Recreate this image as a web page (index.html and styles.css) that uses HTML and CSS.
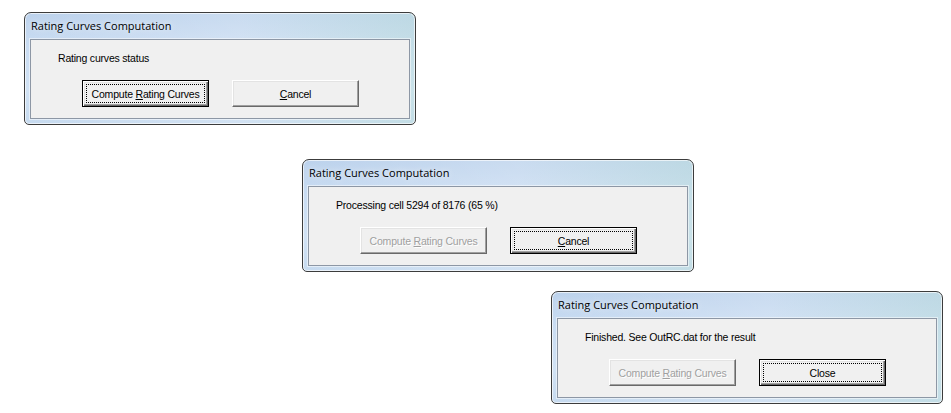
FILE: index.html
```html
<!DOCTYPE html>
<html>
<head>
<meta charset="utf-8">
<link rel="stylesheet" href="styles.css">
</head>
<body>
<div class="stack">
  <div class="window w1">
    <div class="titlebar">Rating Curves Computation</div>
    <div class="client">
      <div class="status">Rating curves status</div>
      <div class="buttons">
        <button class="btn default"><span class="focus"><span class="text">Compute <u>R</u>ating Curves</span></span></button>
        <button class="btn"><span class="label"><span class="text"><u>C</u>ancel</span></span></button>
      </div>
    </div>
  </div>

  <div class="window w2">
    <div class="titlebar">Rating Curves Computation</div>
    <div class="client">
      <div class="status">Processing cell 5294 of 8176 (65 %)</div>
      <div class="buttons">
        <button class="btn disabled"><span class="label"><span class="text">Compute <u>R</u>ating Curves</span></span></button>
        <button class="btn default"><span class="focus"><span class="text"><u>C</u>ancel</span></span></button>
      </div>
    </div>
  </div>

  <div class="window w3">
    <div class="titlebar">Rating Curves Computation</div>
    <div class="client">
      <div class="status">Finished. See OutRC.dat for the result</div>
      <div class="buttons">
        <button class="btn disabled"><span class="label"><span class="text">Compute <u>R</u>ating Curves</span></span></button>
        <button class="btn default"><span class="focus"><span class="text">Close</span></span></button>
      </div>
    </div>
  </div>
</div>
</body>
</html>
```

FILE: styles.css
```css
* { box-sizing: border-box; }

html, body {
  margin: 0;
  padding: 0;
  background: #ffffff;
  width: 951px;
  height: 413px;
  overflow: hidden;
}

.stack {
  display: flex;
  flex-direction: column;
  align-items: flex-start;
  padding-top: 12px;
}

.window {
  width: 392px;
  height: 113px;
  border: 1px solid #3c3c3c;
  border-radius: 7px 7px 5px 5px;
  background:
    linear-gradient(90deg, rgba(255,255,255,0) 0%, rgba(255,255,255,0.2) 55%, rgba(190,225,215,0.4) 100%),
    linear-gradient(180deg, #bcd2ec 0%, #c9dcf2 30%, #d1e2f4 70%, #c6daef 100%);
  box-shadow: inset 0 0 0 1px rgba(255,255,255,0.65);
  padding: 0 5px 5px 5px;
  display: flex;
  flex-direction: column;
}

.w1 { margin-left: 24px; }
.w2 { margin-left: 302px; margin-top: 34px; }
.w3 { margin-left: 551px; margin-top: 19px; }

.titlebar {
  height: 26px;
  padding-left: 1px;
  padding-top: 5px;
  font-family: "Open Sans", "Noto Sans", sans-serif;
  font-size: 11px;
  line-height: 16px;
  color: #000;
  text-shadow: 0 0 6px rgba(255,255,255,0.9);
}

.client {
  flex: 1;
  border: 1px solid #8d97a5;
  box-shadow: 0 0 0 1px rgba(255,255,255,0.5);
  background: #f0f0f0;
  padding: 12px 0 0 27px;
  font-family: "Liberation Sans", Arial, sans-serif;
  font-size: 10.5px;
  letter-spacing: -0.2px;
  color: #000;
}

.status {
  line-height: 13px;
  height: 13px;
}

.buttons {
  display: flex;
  gap: 23px;
  margin-top: 15px;
  margin-left: 24px;
}

.btn {
  width: 127px;
  height: 27px;
  margin: 0;
  padding: 0;
  background: #f0f0f0;
  font-family: "Liberation Sans", Arial, sans-serif;
  font-size: 10.5px;
  letter-spacing: -0.2px;
  color: #000;
  border-style: solid;
  border-width: 1px;
  border-color: #ffffff #696969 #696969 #ffffff;
  box-shadow: inset -1px -1px 0 #a0a0a0, inset 1px 1px 0 #e3e3e3;
  display: flex;
  align-items: stretch;
  justify-content: stretch;
}

.btn .label,
.btn .focus {
  flex: 1;
  display: flex;
  align-items: center;
  justify-content: center;
}

.btn .text {
  white-space: pre;
}

.btn.default {
  border: 1px solid #000;
  box-shadow: inset 1px 1px 0 #ffffff, inset -1px -1px 0 #696969, inset -2px -2px 0 #a0a0a0, inset 2px 2px 0 #e3e3e3;
  padding: 3px;
}

.btn.default .focus {
  border: 1px dotted #000;
}

.btn.disabled {
  color: #a0a0a0;
  text-shadow: 1px 1px 0 #ffffff;
}
```
